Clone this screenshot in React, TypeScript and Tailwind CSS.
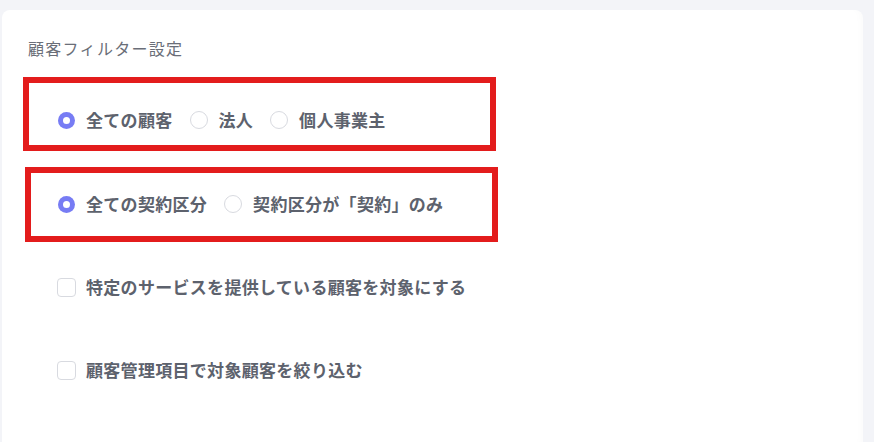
import { useState } from "react";

const font = { fontFamily: '"Noto Sans CJK JP", "Noto Sans", sans-serif' };

type Option = { value: string; label: string };

function Radio({ checked, label, onClick }: { checked: boolean; label: string; onClick: () => void }) {
  return (
    <button type="button" onClick={onClick} className="flex items-center gap-[11px]">
      {checked ? (
        <span className="flex h-[17px] w-[17px] items-center justify-center rounded-full bg-[#777cf4]">
          <span className="h-[7px] w-[7px] rounded-full bg-white" />
        </span>
      ) : (
        <span className="h-[18px] w-[18px] rounded-full border border-[#d8dae0] bg-white" />
      )}
      <span className="text-[17px] font-bold leading-[24px] tracking-[0.3px] text-[#5d626d]">{label}</span>
    </button>
  );
}

function RadioGroup({ options, value, onChange }: { options: Option[]; value: string; onChange: (v: string) => void }) {
  return (
    <div className="flex items-center gap-[17px]">
      {options.map((o) => (
        <Radio key={o.value} checked={value === o.value} label={o.label} onClick={() => onChange(o.value)} />
      ))}
    </div>
  );
}

function Checkbox({ checked, label, onChange }: { checked: boolean; label: string; onChange: (v: boolean) => void }) {
  return (
    <button type="button" onClick={() => onChange(!checked)} className="flex items-center gap-[10px]">
      <span
        className={
          checked
            ? "h-[19px] w-[19px] rounded-[4px] border border-[#777cf4] bg-[#777cf4]"
            : "h-[19px] w-[19px] rounded-[4px] border border-[#d8dae0] bg-white"
        }
      />
      <span className="text-[17px] font-bold leading-[24px] tracking-[0.3px] text-[#5d626d]">{label}</span>
    </button>
  );
}

export default function App() {
  const [customer, setCustomer] = useState("all");
  const [contract, setContract] = useState("all");
  const [byService, setByService] = useState(false);
  const [byField, setByField] = useState(false);

  return (
    <div className="min-h-[442px] bg-[#f3f4f8] pl-[2px] pr-[11px] pt-[10px]" style={font}>
      <div className="min-h-[440px] rounded-lg bg-white pt-[26px] shadow-[inset_-8px_0_10px_-8px_rgba(0,0,0,0.03)]">
        <h2 className="pl-[26px] text-[16px] leading-[24px] tracking-[1.3px] text-[#6a6e78]">顧客フィルター設定</h2>

        <div className="ml-[21px] mt-[17px] w-[473px] border-[6px] border-[#e31c1c] pb-[13px] pl-[29px] pt-[25px]">
          <RadioGroup
            value={customer}
            onChange={setCustomer}
            options={[
              { value: "all", label: "全ての顧客" },
              { value: "corp", label: "法人" },
              { value: "sole", label: "個人事業主" },
            ]}
          />
        </div>

        <div className="ml-[23px] mt-[16px] w-[473px] border-[6px] border-[#e31c1c] pb-[20px] pl-[27px] pt-[19px]">
          <RadioGroup
            value={contract}
            onChange={setContract}
            options={[
              { value: "all", label: "全ての契約区分" },
              { value: "contract", label: "契約区分が「契約」のみ" },
            ]}
          />
        </div>

        <div className="ml-[55px] mt-[33px] flex flex-col gap-[59px]">
          <Checkbox checked={byService} onChange={setByService} label="特定のサービスを提供している顧客を対象にする" />
          <Checkbox checked={byField} onChange={setByField} label="顧客管理項目で対象顧客を絞り込む" />
        </div>
      </div>
    </div>
  );
}
